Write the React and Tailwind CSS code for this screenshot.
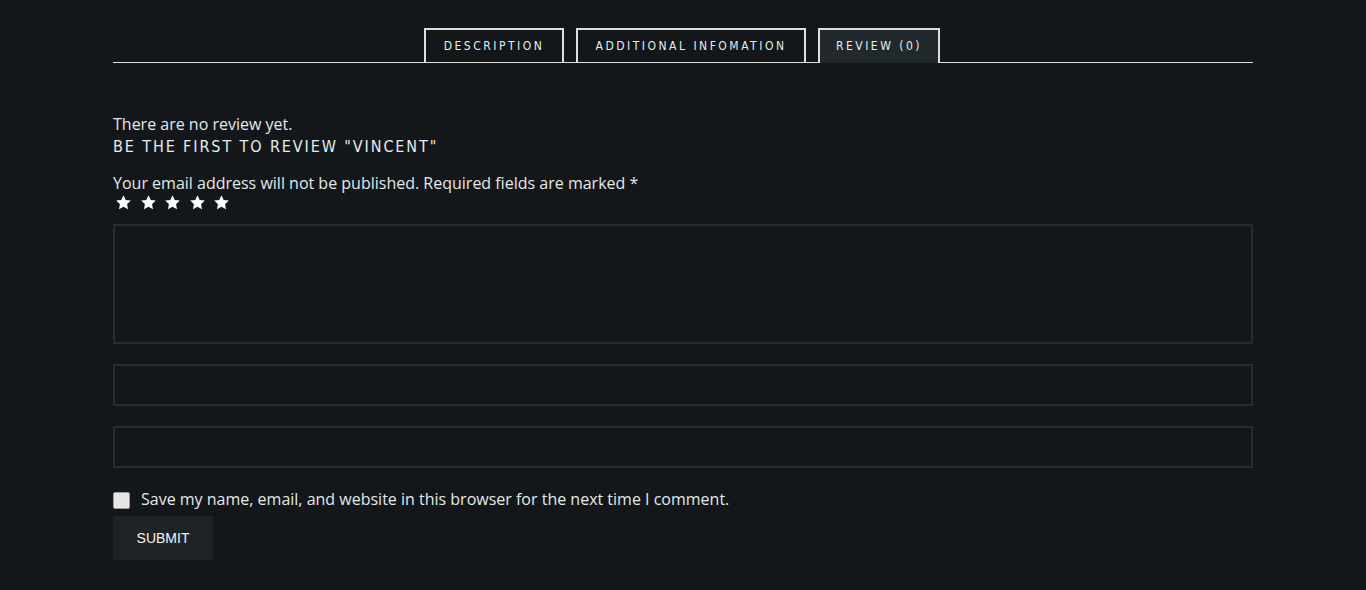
import React from "react";

const Star = () => (
  <svg width="17" height="17" viewBox="0 0 24 24" className="block">
    <path
      fill="#ffffff"
      d="M12 1.8l3.1 6.6 7.2.9-5.3 5 1.4 7.1L12 17.9l-6.4 3.5L7 14.3l-5.3-5 7.2-.9z"
    />
  </svg>
);

const tabFont = {
  fontFamily: '"Liberation Sans Narrow", "DejaVu Sans Condensed", Roboto, sans-serif',
};

export default function App() {
  return (
    <div className="min-h-[590px] w-full bg-[#13171a] text-[#e4e8ea]" style={{ fontFamily: '"Open Sans", sans-serif' }}>
      <div className="mx-auto w-[1140px] pt-[28px]">
        <div className="flex justify-start gap-[12px] border-b border-[#dcdfe0] pl-[311px]">
          <div className="flex h-[34px] w-[140px] items-center justify-center border-x-2 border-t-2 border-[#dcdfe0] text-[12px] tracking-[2.5px] text-[#e4ecee]" style={tabFont}>
            DESCRIPTION
          </div>
          <div className="flex h-[34px] w-[230px] items-center justify-center border-x-2 border-t-2 border-[#dcdfe0] text-[12px] tracking-[2.5px] text-[#e4ecee]" style={tabFont}>
            ADDITIONAL INFOMATION
          </div>
          <div className="-mb-px flex h-[35px] w-[122px] items-center justify-center border-x-2 border-t-2 border-[#dcdfe0] bg-[#22292c] pb-px text-[12px] tracking-[2.5px] text-[#e4ecee]" style={tabFont}>
            REVIEW (0)
          </div>
        </div>

        <p className="mt-[49px] text-[16px] leading-[24px]">There are no review yet.</p>
        <h3 className="text-[16px] leading-[22px] tracking-[1.9px] text-[#e4ecee]" style={tabFont}>
          BE THE FIRST TO REVIEW "VINCENT"
        </h3>
        <p className="mt-[13px] text-[16px] leading-[24px]">
          Your email address will not be published. Required fields are marked *
        </p>
        <div className="mt-[-1px] flex items-center gap-[7.5px] pl-[2px]">
          <Star />
          <Star />
          <Star />
          <Star />
          <Star />
        </div>

        <div className="mt-[13px] h-[120px] w-full border-2 border-[#262c2f] bg-[#13171a]" />
        <div className="mt-[20px] h-[42px] w-full border-2 border-[#262c2f] bg-[#13171a]" />
        <div className="mt-[20px] h-[42px] w-full border-2 border-[#262c2f] bg-[#13171a]" />

        <label className="mt-[19px] flex items-center gap-[11px] text-[16px] leading-[24px]">
          <span className="mt-[3px] block h-[17px] w-[17px] rounded-[2px] border border-[#9a9a9a] bg-[#e6e6e6]" />
          <span>Save my name, email, and website in this browser for the next time I comment.</span>
        </label>
        <button
          className="mt-[5px] flex h-[44px] w-[100px] items-center justify-center bg-[#1f2327] text-[14px] text-[#f0f4f5]"
          style={{ fontFamily: '"Liberation Sans", Arial, sans-serif' }}
        >
          SUBMIT
        </button>
      </div>
    </div>
  );
}
